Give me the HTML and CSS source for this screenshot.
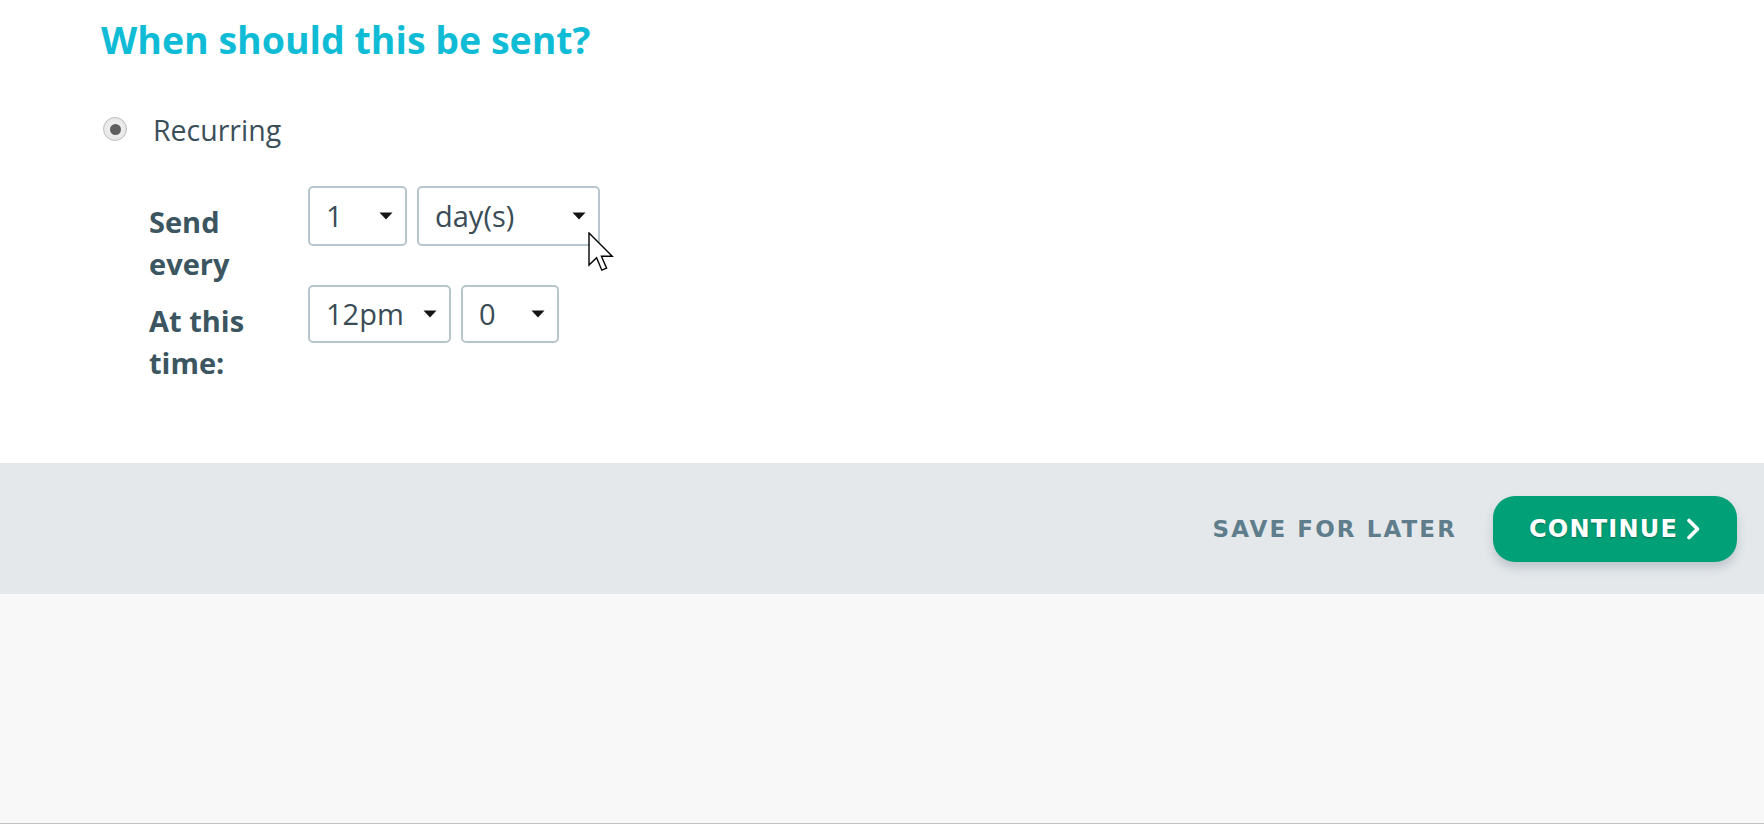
FILE: index.html
```html
<!DOCTYPE html>
<html lang="en">
<head>
    <meta charset="UTF-8">
    <meta name="viewport" content="width=device-width, initial-scale=1.0">
    <title>Schedule</title>
    <link rel="stylesheet" href="styles.css">
</head>
<body>
    <main class="schedule">
        <h2 class="schedule-title">When should this be sent?</h2>

        <!-- Send type -->
        <label class="radio-option">
            <span class="radio checked"></span>
            <span class="radio-label">Recurring</span>
        </label>

        <!-- Recurring options -->
        <div class="recurring-fields">
            <div class="field-row">
                <div class="field-label">Send every</div>
                <div class="field-controls">
                    <div class="dropdown dd-count">
                        <span>1</span>
                        <svg class="caret" width="14" height="8" viewBox="0 0 14 8"><path d="M0.5 0.5h13L7 7.5z"/></svg>
                    </div>
                    <div class="dropdown dd-unit">
                        <span>day(s)</span>
                        <svg class="caret" width="14" height="8" viewBox="0 0 14 8"><path d="M0.5 0.5h13L7 7.5z"/></svg>
                    </div>
                </div>
            </div>
            <div class="field-row">
                <div class="field-label">At this time:</div>
                <div class="field-controls">
                    <div class="dropdown dd-hour">
                        <span>12pm</span>
                        <svg class="caret" width="14" height="8" viewBox="0 0 14 8"><path d="M0.5 0.5h13L7 7.5z"/></svg>
                    </div>
                    <div class="dropdown dd-minute">
                        <span>0</span>
                        <svg class="caret" width="14" height="8" viewBox="0 0 14 8"><path d="M0.5 0.5h13L7 7.5z"/></svg>
                    </div>
                </div>
            </div>
        </div>

        <!-- mouse pointer from the capture -->
        <svg class="pointer" width="26" height="40" viewBox="0 0 13 20">
            <path d="M0.5 0.5v16l3.8-3.6 2.6 6.2 2.4-1-2.6-6h5.4z" fill="#fff" stroke="#000" stroke-width="0.7" stroke-linejoin="miter"/>
        </svg>
    </main>

    <footer class="actions">
        <button class="btn-save">SAVE FOR LATER</button>
        <button class="btn-continue">CONTINUE
            <svg width="15" height="22" viewBox="0 0 15 22"><path d="M3 2.5l8.5 8.5-8.5 8.5" fill="none" stroke="#fff" stroke-width="3.6" stroke-linecap="round" stroke-linejoin="round"/></svg>
        </button>
    </footer>
</body>
</html>
```

FILE: styles.css
```css
/* Basic Reset */
html, body, h2, button {
    margin: 0;
    padding: 0;
}

* {
    box-sizing: border-box;
}

html {
    height: 100%;
}

body {
    min-height: 100%;
    font-family: "Open Sans", Arial, sans-serif;
    background-color: #f8f8f8;
    color: #37474f;
    border-bottom: 1px solid #c2c2c2;
}

/* Main panel */
.schedule {
    position: relative;
    height: 463px;
    padding: 18px 0 0 101px;
    background-color: #fff;
}

.schedule-title {
    font-size: 37.5px;
    line-height: 44px;
    font-weight: 700;
    color: #10bcd5;
}

/* Radio */
.radio-option {
    display: flex;
    align-items: flex-start;
    margin-top: 54px;
}

.radio {
    width: 24px;
    height: 24px;
    margin: 1px 0 0 2px;
    border-radius: 50%;
    border: 1px solid #bdbdbd;
    background: radial-gradient(circle, #f4f4f4 0%, #e2e2e2 100%);
    display: flex;
    align-items: center;
    justify-content: center;
}

.radio.checked::after {
    content: "";
    width: 11px;
    height: 11px;
    border-radius: 50%;
    background-color: #5e5e5e;
}

.radio-label {
    margin-left: 26px;
    font-size: 28.5px;
    line-height: 29px;
    color: #3c4f59;
}

/* Recurring fields */
.recurring-fields {
    margin: 41px 0 0 48px;
}

.field-row {
    display: flex;
    align-items: flex-start;
}

.field-label {
    width: 159px;
    padding: 15px 36px 0 0;
    font-size: 29px;
    line-height: 42px;
    font-weight: 700;
    color: #3b5561;
}

.field-controls {
    display: flex;
    gap: 10px;
}

.dropdown {
    height: 60px;
    display: flex;
    align-items: center;
    justify-content: space-between;
    padding: 0 12px 0 16px;
    border: 2px solid #b7c5cc;
    border-radius: 5px;
    background-color: #fff;
    font-size: 29px;
    line-height: 36px;
    color: #3a4c56;
}

.dd-count { width: 99px; }
.dd-unit { width: 183px; }
.dd-hour { width: 143px; height: 58px; }
.dd-minute { width: 98px; height: 58px; }

.caret {
    flex-shrink: 0;
    fill: #141414;
}

.pointer {
    position: absolute;
    left: 588px;
    top: 232px;
}

/* Footer actions */
.actions {
    height: 131px;
    display: flex;
    align-items: center;
    justify-content: flex-end;
    padding-right: 27px;
    background-color: #e4e8eb;
}

.btn-save {
    margin-right: 36px;
    background: none;
    border: none;
    font-family: "DejaVu Sans", Arial, sans-serif;
    font-size: 23px;
    font-weight: 700;
    letter-spacing: 2.1px;
    color: #607d8b;
    cursor: pointer;
}

.btn-continue {
    width: 244px;
    height: 66px;
    display: flex;
    align-items: center;
    justify-content: center;
    gap: 8px;
    background-color: #02a077;
    border: none;
    border-radius: 22px;
    box-shadow: 0 6px 10px rgba(80, 100, 110, 0.25);
    font-family: "DejaVu Sans", Arial, sans-serif;
    font-size: 24px;
    font-weight: 700;
    letter-spacing: 1.2px;
    color: #fff;
    text-shadow: 0 1px 2px rgba(0, 0, 0, 0.3);
    cursor: pointer;
}

.btn-continue:hover {
    background-color: #00916b;
}
```
